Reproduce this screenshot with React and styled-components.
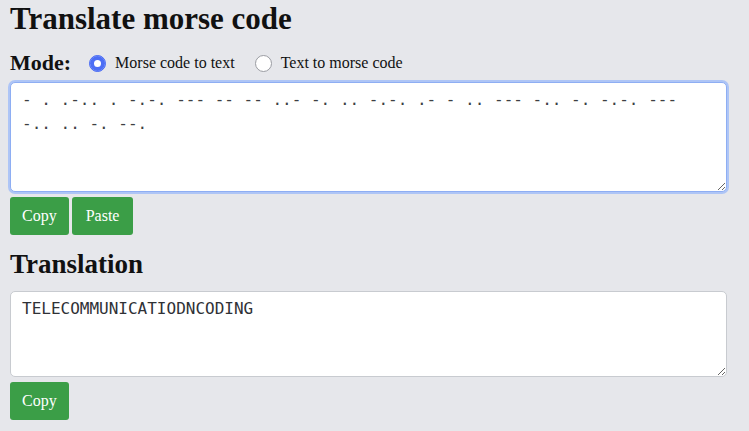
import styled, { createGlobalStyle } from "styled-components";

const GlobalStyle = createGlobalStyle`
  html, body {
    margin: 0;
    padding: 0;
    background: #e6e7eb;
  }
  body {
    font-family: "Liberation Serif", "DejaVu Serif", serif;
    color: #111;
  }
`;

const Page = styled.main`
  display: flex;
  flex-direction: column;
  width: 717px;
  padding: 0 22px 0 10px;
`;

const Title = styled.h1`
  margin: 0;
  padding-top: 1px;
  font-size: 31px;
  line-height: 36px;
  font-weight: bold;
`;

const SubTitle = styled.h2`
  margin: 9px 0 0;
  font-size: 27px;
  line-height: 40px;
  font-weight: bold;
`;

const ModeRow = styled.div`
  display: flex;
  align-items: center;
  height: 36px;
  margin-top: 8px;
`;

const ModeLabel = styled.span`
  font-size: 22px;
  font-weight: bold;
  margin-right: 18px;
`;

const Option = styled.label`
  display: flex;
  align-items: center;
  gap: 9px;
  font-size: 16px;
  margin-right: 20px;
`;

const Radio = styled.input.attrs({ type: "radio" })`
  appearance: none;
  margin: 0;
  width: 17px;
  height: 17px;
  border-radius: 50%;
  background: #fff;
  border: 1px solid #9a9ca2;
  &:checked {
    border-color: #4c6ef5;
    background: #4c6ef5;
    box-shadow: inset 0 0 0 4px #4c6ef5, inset 0 0 0 8px #fff;
  }
`;

const TextArea = styled.textarea`
  display: block;
  box-sizing: border-box;
  width: 100%;
  height: ${(p) => (p.tall ? "110px" : "86px")};
  margin: ${(p) => (p.tall ? "1px 0 0" : "7px 0 0")};
  padding: 5px 11px;
  font-family: "DejaVu Sans Mono", monospace;
  font-size: 16px;
  line-height: 24px;
  color: ${(p) => (p.tall ? "#3d3f44" : "#2f3136")};
  background: #fff;
  border-radius: 5px;
  border: 1px solid ${(p) => (p.focused ? "#8eaef3" : "#c8cbd0")};
  box-shadow: ${(p) => (p.focused ? "0 0 0 2px #aec5f6" : "none")};
  outline: none;
  resize: vertical;
`;

const ButtonRow = styled.div`
  display: flex;
  gap: 3px;
  margin-top: 5px;
`;

const Button = styled.button`
  height: 38px;
  padding: 0 ${(p) => (p.wide ? "14px" : "12px")};
  border: none;
  border-radius: 3px;
  background: #3b9e47;
  color: #fff;
  font-family: "Liberation Serif", "DejaVu Serif", serif;
  font-size: 16px;
  cursor: pointer;
`;

const morse =
  "- . .-.. . -.-. --- -- -- ..- -. .. -.-. .- - .. --- -.. -. -.-. --- -.. .. -. --.";

export default function App() {
  return (
    <>
      <GlobalStyle />
      <Page>
        <Title>Translate morse code</Title>
        <ModeRow>
          <ModeLabel>Mode:</ModeLabel>
          <Option>
            <Radio name="mode" defaultChecked />
            Morse code to text
          </Option>
          <Option>
            <Radio name="mode" />
            Text to morse code
          </Option>
        </ModeRow>
        <TextArea tall focused defaultValue={morse} spellCheck={false} />
        <ButtonRow>
          <Button>Copy</Button>
          <Button wide>Paste</Button>
        </ButtonRow>
        <SubTitle>Translation</SubTitle>
        <TextArea readOnly defaultValue="TELECOMMUNICATIODNCODING" spellCheck={false} />
        <ButtonRow>
          <Button>Copy</Button>
        </ButtonRow>
      </Page>
    </>
  );
}
